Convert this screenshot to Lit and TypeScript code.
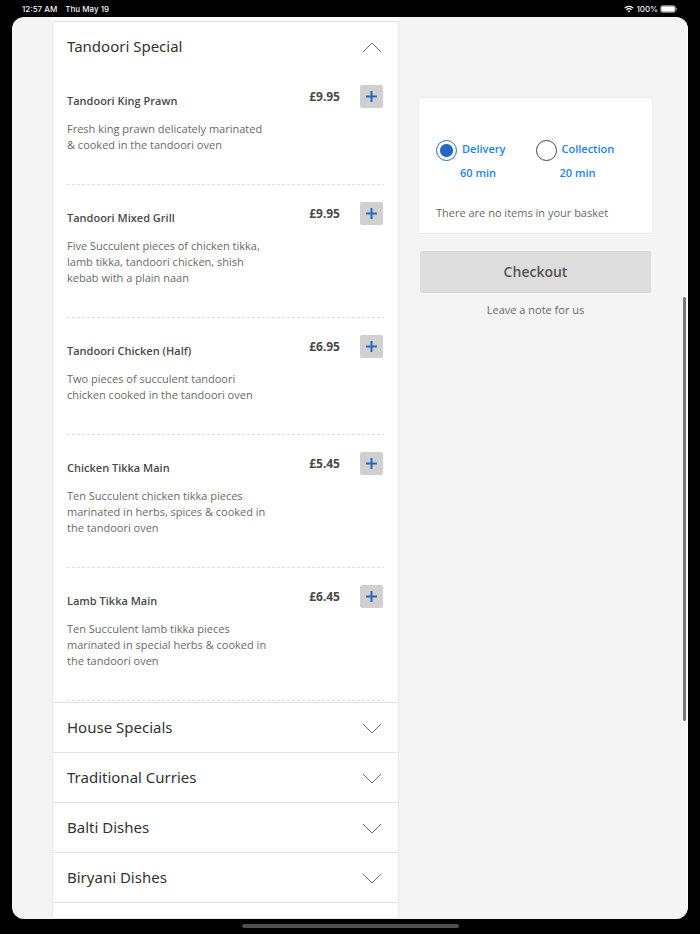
import { LitElement, html, css, svg } from "lit";
import { customElement, state } from "lit/decorators.js";

interface Dish {
  name: string;
  price: string;
  lines: string[];
}

const dishes: Dish[] = [
  { name: "Tandoori King Prawn", price: "£9.95", lines: ["Fresh king prawn delicately marinated", "& cooked in the tandoori oven"] },
  { name: "Tandoori Mixed Grill", price: "£9.95", lines: ["Five Succulent pieces of chicken tikka,", "lamb tikka, tandoori chicken, shish", "kebab with a plain naan"] },
  { name: "Tandoori Chicken (Half)", price: "£6.95", lines: ["Two pieces of succulent tandoori", "chicken cooked in the tandoori oven"] },
  { name: "Chicken Tikka Main", price: "£5.45", lines: ["Ten Succulent chicken tikka pieces", "marinated in herbs, spices & cooked in", "the tandoori oven"] },
  { name: "Lamb Tikka Main", price: "£6.45", lines: ["Ten Succulent lamb tikka pieces", "marinated in special herbs & cooked in", "the tandoori oven"] },
];

const categories = ["House Specials", "Traditional Curries", "Balti Dishes", "Biryani Dishes"];

const chevron = (up: boolean) => html`<svg class="chevron" width="20" height="11" viewBox="0 0 20 11" aria-hidden="true">
  ${up
    ? svg`<path d="M1 10 L10 1 L19 10" fill="none" stroke="#6e6e6e"/>`
    : svg`<path d="M1 1 L10 10 L19 1" fill="none" stroke="#6e6e6e"/>`}
</svg>`;

@customElement("status-bar")
export class StatusBar extends LitElement {
  static styles = css`
    :host {
      display: flex;
      justify-content: space-between;
      align-items: center;
      height: 17px;
      padding: 0 22px;
      color: #f2f2f2;
      font: 500 8px/16px Inter, "Liberation Sans", sans-serif;
    }
    .group { display: flex; align-items: center; }
    .left { gap: 8px; }
    .right { gap: 2px; }
    svg { display: block; }
  `;
  render() {
    return html`
      <div class="group left"><span>12:57 AM</span><span>Thu May 19</span></div>
      <div class="group right">
        <svg width="10" height="8" viewBox="0 0 10 8" aria-label="Wi-Fi">
          <path d="M.8 3.1 C3.2 .7 6.8 .7 9.2 3.1 M2.4 4.8 C3.9 3.4 6.1 3.4 7.6 4.8" fill="none" stroke="#fff" stroke-width="1.3"/>
          <path d="M5 7.6 L3.6 6.1 C4.4 5.4 5.6 5.4 6.4 6.1 Z" fill="#fff"/>
        </svg>
        <span>100%</span>
        <svg width="18" height="8" viewBox="0 0 18 8" aria-label="Battery full">
          <rect x=".5" y=".5" width="15" height="7" rx="2" fill="none" stroke="#777"/>
          <rect x="1.2" y="1.2" width="13.6" height="5.6" rx="1.2" fill="#fff"/>
          <path d="M16.6 2.8 V5.2" stroke="#888" stroke-width="1"/>
        </svg>
      </div>
    `;
  }
}

@customElement("menu-list")
export class MenuList extends LitElement {
  static styles = css`
    :host {
      display: block;
      box-sizing: border-box;
      margin-top: 4px;
      background: #fff;
      border: 1px solid #e8e8e8;
      border-top: 0;
      box-shadow: 0 -4px #fff;
    }
    h2, h3, p, ul { margin: 0; padding: 0; }
    ul { list-style: none; padding: 0 14px 1px; }
    .category { border-top: 1px solid #e2e2e2; }
    .toggle {
      display: flex;
      justify-content: space-between;
      align-items: center;
      width: 100%;
      height: 49px;
      padding: 0 16px 2px 14px;
      border: 0;
      background: none;
      color: #333;
      font: 400 15px/20px "Noto Sans", "Open Sans", sans-serif;
      text-align: left;
    }
    .chevron { display: block; margin-top: 3px; }
    .dish {
      display: grid;
      grid-template-columns: 1fr auto 23px;
      column-gap: 20px;
      align-items: start;
      padding: 14px 1px 32px 0;
      margin-bottom: 3px;
      background: repeating-linear-gradient(90deg, #dedede 0 3px, transparent 3px 5px) bottom / 100% 1px no-repeat;
    }
    .dish:last-child { margin-bottom: 0; }
    .name {
      padding-top: 8px;
      color: #4a4a4a;
      font: 600 11px/16px "Open Sans", sans-serif;
    }
    .desc {
      margin-top: 12px;
      color: #6a6a6a;
      font: 400 11px/16px "Open Sans", sans-serif;
    }
    .desc span { display: block; white-space: nowrap; }
    .price {
      padding-top: 4px;
      color: #4a4a4a;
      font: 700 12px/16px "Noto Sans", sans-serif;
    }
    .add {
      display: grid;
      place-items: center;
      width: 23px;
      height: 23px;
      padding: 0;
      border: 0;
      border-radius: 2px;
      background: #d0d0d0;
    }
    .end { border-top: 1px solid #e2e2e2; }
  `;
  render() {
    return html`
      <section class="category">
        <h2><button class="toggle" aria-expanded="true">Tandoori Special ${chevron(true)}</button></h2>
        <ul>
          ${dishes.map(
            (d) => html`<li class="dish">
              <div>
                <h3 class="name">${d.name}</h3>
                <p class="desc">${d.lines.map((l) => html`<span>${l}</span>`)}</p>
              </div>
              <div class="price">${d.price}</div>
              <button class="add" aria-label="Add ${d.name}">
                <svg width="11" height="11" viewBox="0 0 11 11" aria-hidden="true">
                  <path d="M5.5 0 V11 M0 5.5 H11" stroke="#2468c4" stroke-width="2"/>
                </svg>
              </button>
            </li>`
          )}
        </ul>
      </section>
      ${categories.map(
        (c) => html`<section class="category">
          <h2><button class="toggle" aria-expanded="false">${c} ${chevron(false)}</button></h2>
        </section>`
      )}
      <div class="end"></div>
    `;
  }
}

@customElement("order-basket")
export class OrderBasket extends LitElement {
  @state() private mode = "delivery";

  static styles = css`
    :host {
      display: flex;
      flex-direction: column;
      padding-top: 80px;
      font: 400 11px/16px "Open Sans", sans-serif;
      color: #6a6a6a;
    }
    .card {
      padding: 42px 17px 12px;
      border: 1px solid #ebebeb;
      border-radius: 2px;
      background: #fff;
    }
    .options {
      display: grid;
      grid-template-columns: 1fr 1fr;
      margin: 0;
      padding: 0;
      border: 0;
    }
    .option {
      display: grid;
      grid-template-columns: 21px 1fr;
      column-gap: 5px;
      row-gap: 4px;
      color: #1683f5;
      font-weight: 600;
    }
    .radio {
      appearance: none;
      box-sizing: border-box;
      width: 21px;
      height: 21px;
      margin: 0;
      border: 1px solid #444;
      border-radius: 50%;
      background: #fff;
    }
    .radio:checked {
      border-color: #2468c4;
      background: radial-gradient(circle, #2468c4 6px, #fff 7px);
    }
    .label { padding-top: 1px; }
    .time { grid-column: 1 / -1; padding-left: 24px; }
    .message { margin: 24px 0 0; }
    .checkout {
      height: 42px;
      margin: 17px 2px 0;
      border: 0;
      border-radius: 2px;
      background: #ddd;
      color: #555;
      font: 600 14px/20px "Open Sans", sans-serif;
    }
    .note {
      align-self: center;
      margin-top: 9px;
      color: #6a6a6a;
      text-decoration: none;
    }
  `;

  private option(value: string, label: string, time: string) {
    return html`<label class="option">
      <input class="radio" type="radio" name="mode" .value=${value} .checked=${this.mode === value}
        @change=${() => (this.mode = value)} />
      <span class="label">${label}</span>
      <span class="time">${time}</span>
    </label>`;
  }

  render() {
    return html`
      <div class="card">
        <fieldset class="options" aria-label="Order type">
          ${this.option("delivery", "Delivery", "60 min")}
          ${this.option("collection", "Collection", "20 min")}
        </fieldset>
        <p class="message">There are no items in your basket</p>
      </div>
      <button class="checkout">Checkout</button>
      <a class="note" href="#note">Leave a note for us</a>
    `;
  }
}

@customElement("app-root")
export class AppRoot extends LitElement {
  static styles = css`
    :host {
      display: flex;
      flex-direction: column;
      height: 100vh;
      background: #000;
    }
    .screen {
      position: relative;
      flex: 1;
      min-height: 0;
      overflow: hidden;
      box-sizing: border-box;
      margin: 0 12px;
      padding: 0 34px 0 40px;
      border-right: 1px solid #fff;
      border-radius: 12px;
      background: #f4f4f4;
      display: grid;
      grid-template-columns: 347fr 235fr;
      column-gap: 19px;
    }
    .scrollbar {
      position: absolute;
      right: 1px;
      top: 31%;
      width: 3px;
      height: 47%;
      border-radius: 2px;
      background: #777;
    }
    .home {
      width: 31%;
      height: 4px;
      margin: 5px auto 6px;
      border-radius: 2px;
      background: #505050;
    }
  `;
  render() {
    return html`
      <status-bar></status-bar>
      <main class="screen">
        <menu-list></menu-list>
        <order-basket></order-basket>
        <div class="scrollbar"></div>
      </main>
      <div class="home"></div>
    `;
  }
}
